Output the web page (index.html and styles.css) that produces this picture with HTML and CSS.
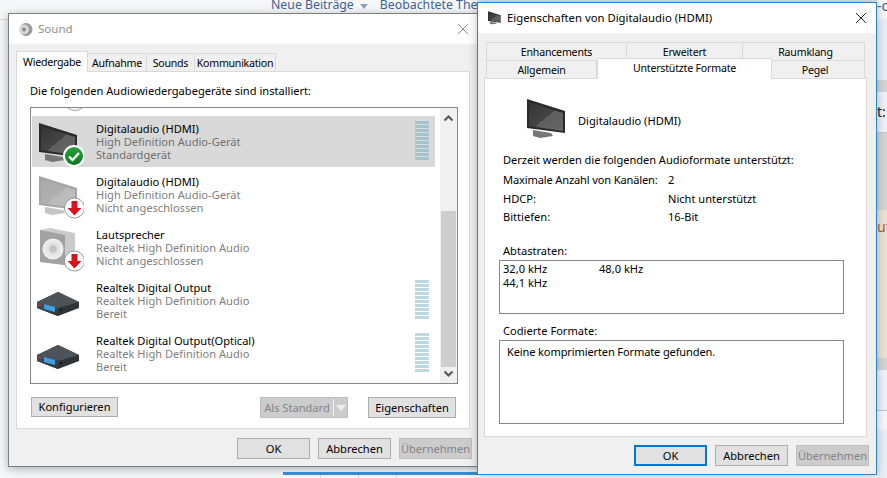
FILE: index.html
```html
<!DOCTYPE html>
<html lang="de">
<head>
<meta charset="utf-8">
<title>Sound</title>
<link rel="stylesheet" href="styles.css">
</head>
<body>
<svg class="defs" width="0" height="0" aria-hidden="true">
  <defs>
    <linearGradient id="scr" x1="0" y1="0" x2="1" y2="1"><stop offset="0" stop-color="#343434"/><stop offset=".52" stop-color="#454545"/><stop offset=".52" stop-color="#5e5e5e"/><stop offset="1" stop-color="#666"/></linearGradient>
    <linearGradient id="grn" x1="0" y1="0" x2="0" y2="1"><stop offset="0" stop-color="#2aa13a"/><stop offset="1" stop-color="#0a7a1e"/></linearGradient>
    <linearGradient id="box" x1="0" y1="0" x2="0" y2="1"><stop offset="0" stop-color="#4e565c"/><stop offset="1" stop-color="#2b3034"/></linearGradient>
    <radialGradient id="cone"><stop offset="0" stop-color="#bdbdbd"/><stop offset=".4" stop-color="#e0e0e0"/><stop offset="1" stop-color="#f0f0f0"/></radialGradient>
    <symbol id="monitor" viewBox="0 0 48 48">
      <polygon points="9,35 27,38 29,41 16,43 9,41" fill="#777"/>
      <polygon points="3,4 41,16 41,38 3,33" fill="#2a2a2a"/>
      <polygon points="5,7 39,18 39,36 5,31" fill="url(#scr)"/>
    </symbol>
    <symbol id="speaker" viewBox="0 0 48 48">
      <polygon points="4,5 14,3 39,8 39,33 29,40 4,37" fill="#cbcbcb"/>
      <polygon points="4,5 29,10 29,40 4,37" fill="#a2a2a2"/>
      <circle cx="17" cy="24" r="10.500" fill="url(#cone)"/>
      <circle cx="17" cy="24" r="3.500" fill="#c2c2c2"/>
    </symbol>
    <symbol id="receiver" viewBox="0 0 48 48">
      <polygon points="22,14 43,24 43,30 22,38 1,30 1,24" fill="#2e3337"/>
      <polygon points="22,14 43,24 22,30 1,24" fill="#4c545a"/>
      <polygon points="1,24 22,30 22,38 1,30" fill="url(#box)"/>
      <polygon points="8,26 19,29 19,34 8,31" fill="#3f9fe0"/>
      <circle cx="4" cy="27" r="1.300" fill="#b3312e"/>
      <circle cx="25" cy="32" r="1.300" fill="#15181a"/>
    </symbol>
    <symbol id="ok-badge" viewBox="0 0 48 48">
      <circle cx="38" cy="37" r="11" fill="#fff"/>
      <circle cx="38" cy="37" r="9" fill="url(#grn)"/>
      <path d="M33 37.500l3.500 3.500 6.500-7" fill="none" stroke="#fff" stroke-width="2.400"/>
    </symbol>
    <symbol id="down-badge" viewBox="0 0 48 48">
      <circle cx="38.500" cy="36" r="10" fill="#fff" stroke="#9a9a9a"/>
      <path d="M35.500 29h6v7h4l-7 7.500-7-7.500h4z" fill="#d9141c"/>
    </symbol>
  </defs>
</svg>

<main class="desktop">
  <div class="page-bg">
    <nav class="site-nav">
      <span>Neue Beiträge</span><i class="nav-caret"></i><span class="nav-next">Beobachtete Themen</span>
    </nav>
    <div class="site-rule"></div>
    <div class="site-top"></div>
    <div class="site-strip">
      <span class="strip-a"><b class="frag">-o</b></span>
      <span class="strip-b"></span>
      <span class="strip-c"><b class="frag frag-dark">t:</b></span>
      <span class="strip-d"></span>
      <span class="strip-e"><b class="frag frag-warm">ut</b></span>
      <span class="strip-b"></span>
      <span class="strip-c"></span>
      <span class="strip-a strip-end"></span>
    </div>
    <div class="site-table"><span></span><span></span><span></span></div>
  </div>

  <section class="win win-sound">
    <header class="titlebar titlebar-dim">
      <svg class="title-icon" viewBox="0 0 15 15"><circle cx="8" cy="7.500" r="6.500" fill="#999"/><circle cx="6" cy="7.500" r="5" fill="#d8d8d8"/><circle cx="6" cy="7.500" r="2" fill="#8a8a8a"/></svg>
      <h1 class="title-text">Sound</h1>
      <svg class="close" viewBox="0 0 12 12"><path d="M1 1l10 10M11 1L1 11" stroke="currentColor" fill="none"/></svg>
    </header>
    <div class="win-body sound-body">
      <div class="tabs">
        <span class="tab tab-active tab-w">Wiedergabe</span>
        <span class="tab tab-a">Aufnahme</span>
        <span class="tab tab-s">Sounds</span>
        <span class="tab tab-k">Kommunikation</span>
      </div>
      <div class="panel sound-panel">
        <p class="intro">Die folgenden Audiowiedergabegeräte sind installiert:</p>
        <div class="listbox">
          <div class="items">
            <svg class="peek" viewBox="0 0 16 8"><path d="M1 0q7 5 14 0" fill="none" stroke="#bcbcbc" stroke-width="1.500"/></svg>
            <div class="row row-selected">
              <div class="row-icon"><svg viewBox="0 0 48 48"><use href="#monitor"/><use href="#ok-badge"/></svg></div>
              <div class="row-text"><b>Digitalaudio (HDMI)</b><span>High Definition Audio-Gerät</span><span>Standardgerät</span></div>
              <div class="meter"><i></i><i></i><i></i><i></i><i></i><i></i><i></i><i></i><i></i><i></i></div>
            </div>
            <div class="row">
              <div class="row-icon"><svg viewBox="0 0 48 48"><use href="#monitor" class="faded"/><use href="#down-badge"/></svg></div>
              <div class="row-text"><b>Digitalaudio (HDMI)</b><span>High Definition Audio-Gerät</span><span>Nicht angeschlossen</span></div>
            </div>
            <div class="row">
              <div class="row-icon"><svg viewBox="0 0 48 48"><use href="#speaker"/><use href="#down-badge"/></svg></div>
              <div class="row-text"><b>Lautsprecher</b><span>Realtek High Definition Audio</span><span>Nicht angeschlossen</span></div>
            </div>
            <div class="row">
              <div class="row-icon"><svg viewBox="0 0 48 48"><use href="#receiver"/></svg></div>
              <div class="row-text"><b>Realtek Digital Output</b><span>Realtek High Definition Audio</span><span>Bereit</span></div>
              <div class="meter"><i></i><i></i><i></i><i></i><i></i><i></i><i></i><i></i><i></i><i></i></div>
            </div>
            <div class="row">
              <div class="row-icon"><svg viewBox="0 0 48 48"><use href="#receiver"/></svg></div>
              <div class="row-text"><b>Realtek Digital Output(Optical)</b><span>Realtek High Definition Audio</span><span>Bereit</span></div>
              <div class="meter"><i></i><i></i><i></i><i></i><i></i><i></i><i></i><i></i><i></i><i></i></div>
            </div>
          </div>
          <div class="scrollbar">
            <svg class="sb-arrow" viewBox="0 0 17 20"><path d="M4.500 12.500l4-4 4 4" fill="none" stroke="#555" stroke-width="2"/></svg>
            <div class="sb-track"></div>
            <div class="sb-thumb"></div>
            <svg class="sb-arrow sb-arrow-down" viewBox="0 0 17 16"><path d="M4.500 4.500l4 4 4-4" fill="none" stroke="#555" stroke-width="2"/></svg>
          </div>
        </div>
        <div class="panel-actions">
          <button class="btn btn-config">Konfigurieren</button>
          <span class="actions-gap"></span>
          <div class="btn btn-off btn-split"><span class="split-label">Als Standard</span><span class="split-arrow"></span></div>
          <button class="btn btn-props">Eigenschaften</button>
        </div>
      </div>
      <div class="dialog-actions">
        <button class="btn">OK</button>
        <button class="btn">Abbrechen</button>
        <button class="btn btn-off">Übernehmen</button>
      </div>
    </div>
  </section>

  <section class="win win-props">
    <header class="titlebar">
      <svg class="title-icon-small" viewBox="0 0 48 48"><use href="#monitor"/></svg>
      <h1 class="title-text">Eigenschaften von Digitalaudio (HDMI)</h1>
      <svg class="close close-dark" viewBox="0 0 12 12"><path d="M1 1l10 10M11 1L1 11" stroke="currentColor" fill="none"/></svg>
    </header>
    <div class="win-body props-body">
      <div class="tabs2">
        <div class="tabrow">
          <span class="tab2 t-enh">Enhancements</span>
          <span class="tab2 t-erw">Erweitert</span>
          <span class="tab2 t-rau">Raumklang</span>
        </div>
        <div class="tabrow">
          <span class="tab2 t-all">Allgemein</span>
          <span class="tab2 t-unt">Unterstützte Formate</span>
          <span class="tab2 t-peg">Pegel</span>
        </div>
      </div>
      <div class="panel props-panel">
        <div class="device">
          <svg class="device-icon" viewBox="0 0 48 48"><use href="#monitor"/></svg>
          <span>Digitalaudio (HDMI)</span>
        </div>
        <p class="formats-intro">Derzeit werden die folgenden Audioformate unterstützt:</p>
        <dl class="specs">
          <dt>Maximale Anzahl von Kanälen:</dt><dd>2</dd>
          <dt>HDCP:</dt><dd>Nicht unterstützt</dd>
          <dt>Bittiefen:</dt><dd>16-Bit</dd>
        </dl>
        <p class="field-label">Abtastraten:</p>
        <div class="field rates">
          <span>32,0 kHz</span><span>48,0 kHz</span><span>44,1 kHz</span>
        </div>
        <p class="field-label field-label-2">Codierte Formate:</p>
        <div class="field codecs">Keine komprimierten Formate gefunden.</div>
      </div>
      <div class="dialog-actions props-actions">
        <button class="btn btn-default">OK</button>
        <button class="btn">Abbrechen</button>
        <button class="btn btn-off">Übernehmen</button>
      </div>
    </div>
  </section>
</main>
</body>
</html>
```
FILE: styles.css
```css
* { box-sizing: border-box; }
html, body { margin: 0; padding: 0; }
body { width: 887px; height: 478px; overflow: hidden; background: #f6f7f9; font: 11.100px/16px "Noto Sans", "Open Sans", sans-serif; color: #000; }
.defs { position: absolute; }
p, h1, dl, dd { margin: 0; }
.desktop { position: relative; width: 887px; height: 478px; overflow: hidden; }

/* page behind the dialogs */
.page-bg { position: absolute; inset: 0; }
.site-nav { position: absolute; left: 271px; top: -3px; display: flex; align-items: center; color: #3f5f9c; white-space: nowrap; font-size: 12.300px; }
.nav-caret { width: 0; height: 0; margin: 2px 0 0 6px; border: 4px solid transparent; border-top: 5px solid #8ba0c4; border-bottom: 0; }
.nav-next { margin-left: 12px; }
.site-rule { position: absolute; left: 0; top: 19px; width: 10px; height: 1px; background: #dcdcdc; }
.site-top { position: absolute; left: 477px; top: 0; width: 410px; height: 2px; background: #dfe5ec; }
.site-strip { position: absolute; left: 877px; top: 0; width: 10px; height: 478px; display: flex; flex-direction: column; overflow: hidden; }
.site-strip span { display: block; position: relative; flex: none; }
.strip-a { height: 80px; background: #e9eef5; border-top: 19px solid #f7f7f7; }
.strip-b { height: 12px; background: #d4d4d4; }
.strip-c { height: 41px; background: #eef1f5; border-bottom: 1px solid #c4c4c4; }
.strip-d { height: 77px; background: #d4d4d4; }
.strip-e { height: 148px; background: #ebe1d5; }
.strip-end { height: 108px; }
.frag { position: absolute; left: 0; font-weight: 400; font-size: 14px; color: #3f5f9c; white-space: nowrap; }
.strip-a .frag { top: -21px; }
.frag-dark { top: 12px; color: #222; }
.frag-warm { top: 9px; color: #a55a28; }
.site-table { position: absolute; left: 283px; top: 472px; width: 200px; height: 6px; border-top: 3px solid #3c93dc; display: flex; }
.site-table span { width: 38px; border-right: 1px solid #d8d8d8; }

/* windows */
.win { position: absolute; display: flex; flex-direction: column; background: #f0f0f0; }
.win-sound { left: 8px; top: 13px; width: 472px; height: 454px; border: 1px solid #7f7f7f; box-shadow: 0 2px 9px rgba(0,0,0,.3); }
.win-props { left: 477px; top: 2px; width: 400px; height: 473px; border: 1px solid #2484d6; box-shadow: 0 0 9px rgba(0,0,0,.25); }
.titlebar { height: 30px; flex: none; display: flex; align-items: center; background: #fff; padding-left: 9px; }
.title-icon { width: 15px; height: 15px; flex: none; }
.title-icon-small { width: 16px; height: 16px; flex: none; }
.title-text { font: inherit; font-size: 11.300px; margin-left: 4px; flex: 1; white-space: nowrap; }
.titlebar-dim .title-text { color: #8f8f8f; font-size: 11.500px; margin-left: 5px; }
.close { width: 12px; height: 12px; color: #8a8a8a; flex: none; margin-right: 10px; }
.close-dark { color: #222; margin-right: 9px; }
.win-body { flex: 1; min-height: 0; display: flex; flex-direction: column; }

/* sound tabs */
.sound-body { padding: 7px 9px 0 7px; }
.tabs { display: flex; align-items: flex-end; height: 21px; flex: none; position: relative; z-index: 1; margin-bottom: -1px; font-size: 10.600px; letter-spacing: -.25px; }
.tab { height: 19px; padding-top: 1px; text-align: center; background: #f0f0f0; border: 1px solid #d9d9d9; border-left: 0; white-space: nowrap; }
.tab-active { height: 21px; padding-top: 2px; background: #fff; border-left: 1px solid #d9d9d9; border-bottom: 0; }
.tab-w { width: 72px; }
.tab-a { width: 59px; }
.tab-s { width: 48px; }
.tab-k { width: 81px; }
.panel { background: #fff; border: 1px solid #d9d9d9; }
.sound-panel { height: 358px; width: 454px; padding: 11px 0 0 13px; flex: none; }
.intro { height: 24px; }
.listbox { width: 428px; height: 277px; display: flex; border: 1px solid #82878f; }
.items { flex: 1; padding-left: 1px; min-width: 0; }
.peek { display: block; width: 16px; height: 8px; margin-left: 35px; }
.row { display: flex; width: 403px; height: 51px; margin-bottom: 2px; position: relative; }
.row-selected { background: #d9d9d9; }
.row-icon { width: 64px; flex: none; padding: 3px 0 0 4px; }
.row-icon svg { display: block; width: 48px; height: 48px; overflow: visible; }
.faded { opacity: .42; }
.row-text { flex: 1; display: flex; flex-direction: column; padding-top: 5.700px; color: #808080; line-height: 13.300px; white-space: nowrap; }
.row-text b { font-weight: 400; color: #000; }
.row-selected .row-text span { color: #6f6f6f; }
.meter { width: 14px; margin: 5px 6px 0 0; display: flex; flex-direction: column; gap: 1px; flex: none; }
.meter i { display: block; height: 3px; background: #bfd9e2; }
.row-selected .meter i { background: #a6c3cb; }
.scrollbar { width: 17px; flex: none; background: #f0f0f0; display: flex; flex-direction: column; }
.sb-arrow { display: block; width: 17px; height: 20px; flex: none; }
.sb-track { height: 83px; flex: none; }
.sb-thumb { flex: 1; width: 15px; margin-left: 1px; background: #cdcdcd; }
.sb-arrow-down { height: 16px; }
.panel-actions { display: flex; align-items: flex-start; width: 425px; margin: 13px 0 0 1px; }
.actions-gap { flex: 1; }
.btn { width: 73px; height: 21px; padding: 0; display: block; font: inherit; color: #000; background: #e1e1e1; border: 1px solid #adadad; text-align: center; line-height: 19px; white-space: nowrap; }
.btn-off { background: #ccc; border-color: #bfbfbf; color: #838383; }
.btn-config { width: 87px; height: 20px; line-height: 18px; }
.btn-split { width: 88px; display: flex; align-items: stretch; }
.split-label { flex: 1; }
.split-arrow { width: 14px; border-left: 1px solid #efefef; position: relative; margin: 1px 0; }
.split-arrow::after { content: ""; position: absolute; left: 2px; top: 6px; border: 5px solid transparent; border-top: 6px solid #efefef; border-bottom: 0; }
.btn-props { width: 88px; margin-left: 20px; }
.dialog-actions { display: flex; justify-content: flex-end; gap: 8px; padding-top: 9px; width: 456px; }

/* properties tabs */
.props-body { padding: 9px 9px 0 6px; }
.tabs2 { display: flex; flex-direction: column; flex: none; padding-left: 2px; height: 36px; position: relative; z-index: 1; margin-bottom: -1px; font-size: 10.600px; letter-spacing: -.2px; }
.tabrow { display: flex; height: 18px; flex: none; }
.tab2 { height: 19px; padding-top: 1px; text-align: center; background: #f0f0f0; border: 1px solid #d9d9d9; border-left: 0; line-height: 16px; white-space: nowrap; }
.tabrow:first-child .tab2 { height: 18px; padding-top: 1px; border-bottom: 0; }
.t-enh { width: 141px; border-left: 1px solid #d9d9d9; }
.t-erw { width: 116px; }
.t-rau { width: 122px; padding-left: 4px; }
.t-all { width: 111px; border-left: 1px solid #d9d9d9; }
.t-unt { width: 175px; height: 21px !important; margin-top: -2px; background: #fff; border-bottom: 0; border-left: 1px solid #d9d9d9; }
.t-peg { width: 93px; padding-right: 6px; }
.props-panel { width: 383px; height: 360px; flex: none; padding: 0 0 0 14px; }
.device { display: flex; align-items: center; height: 67px; padding-left: 25px; }
.device-icon { width: 48px; height: 48px; margin-right: 6px; flex: none; margin-top: 15px; }
.device span { margin-top: 19px; }
.formats-intro { margin: 7px 0 0 4px; white-space: nowrap; letter-spacing: -.05px; }
.specs { display: grid; grid-template-columns: 165px 1fr; margin: 3px 0 0 4px; grid-auto-rows: 18.500px; }
.specs dt, .specs dd { white-space: nowrap; line-height: 18.500px; }
.specs dt:first-child { letter-spacing: -.15px; }
.field-label { margin: 16px 0 0 4px; height: 17px; }
.field-label-2 { margin-top: 9px; }
.field { width: 345px; border: 1px solid #85878f; background: #fff; }
.rates { height: 54px; display: grid; grid-template-columns: 96px 1fr; grid-auto-rows: 14px; padding: 1px 0 0 3px; line-height: 14px; }
.codecs { height: 84px; padding: 3px 0 0 7px; letter-spacing: -.15px; }
.props-actions { width: 385px; padding-top: 8px; }
.btn-default { border: 2px solid #0078d7; line-height: 17px; }
```
